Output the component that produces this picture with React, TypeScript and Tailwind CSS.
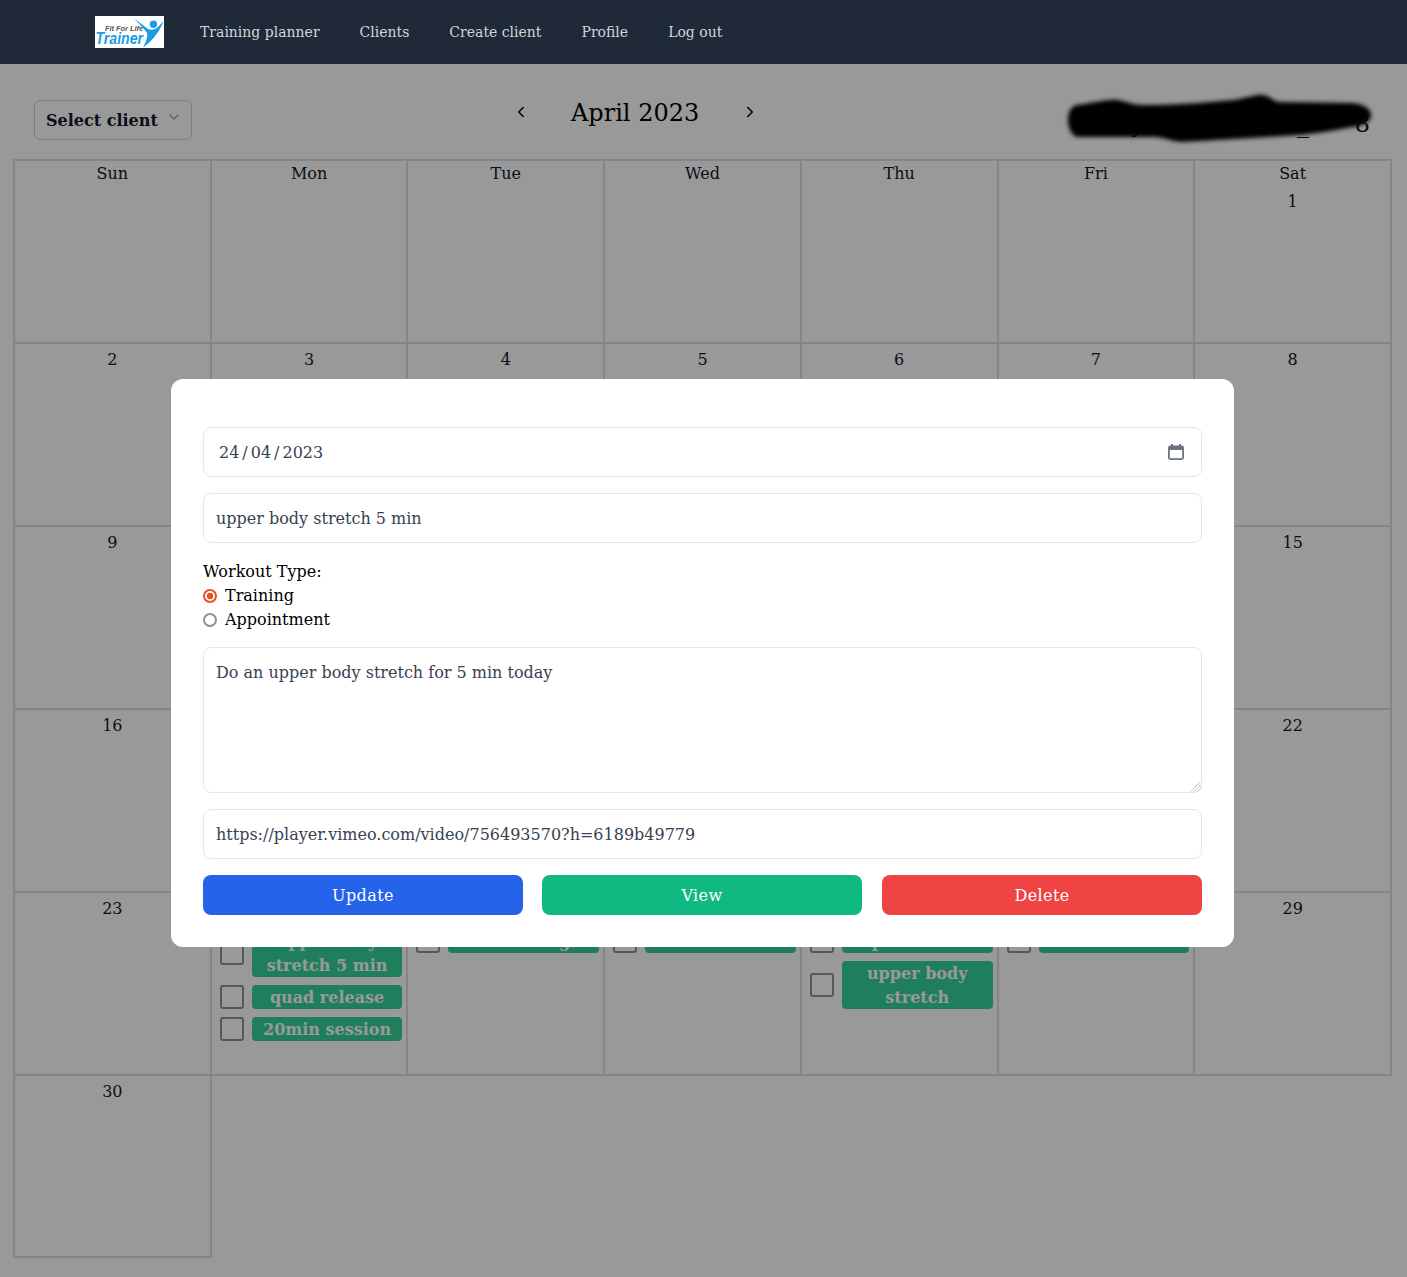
import { ChevronDown, ChevronLeft, ChevronRight } from "lucide-react";

type Ev = string;
const days: { label?: string; day?: number; events?: Ev[] }[] = [
  { label: "Sun" }, { label: "Mon" }, { label: "Tue" }, { label: "Wed" }, { label: "Thu" }, { label: "Fri" }, { label: "Sat", day: 1 },
  { day: 2 }, { day: 3 }, { day: 4 }, { day: 5 }, { day: 6 }, { day: 7 }, { day: 8 },
  { day: 9 }, { day: 10 }, { day: 11 }, { day: 12 }, { day: 13 }, { day: 14 }, { day: 15 },
  { day: 16 }, { day: 17 }, { day: 18 }, { day: 19 }, { day: 20 }, { day: 21 }, { day: 22 },
  { day: 23 },
  { day: 24, events: ["upper body stretch 5 min", "quad release", "20min session"] },
  { day: 25, events: ["stretching"] },
  { day: 26, events: ["20min session"] },
  { day: 27, events: ["spin session", "upper body stretch"] },
  { day: 28, events: ["20min session"] },
  { day: 29 },
  { day: 30 },
];

function Logo() {
  return (
    <svg width="69" height="32" viewBox="0 0 69 32" className="block bg-white">
      <text x="10" y="15" fontFamily="Liberation Sans" fontSize="8" fontStyle="italic" fontWeight="700" fill="#555" textLength="38" lengthAdjust="spacingAndGlyphs">Fit For Life</text>
      <text x="0.5" y="28.3" fontFamily="Liberation Sans" fontSize="17" fontStyle="italic" fontWeight="700" fill="#1d9be3" textLength="47.5" lengthAdjust="spacingAndGlyphs">Trainer</text>
      <circle cx="58.4" cy="8.3" r="3.7" fill="#1d9be3" />
      <path d="M39 2.5C44 6 49 10 53 13C57 15 61 13 64 10L68.5 5C65.5 13 60 23 48 31.5C51 26 53 20 52 17C48 11 43 7 39 2.5Z" fill="#1d9be3" />
    </svg>
  );
}

function Cell({ label, day, events, last }: { label?: string; day?: number; events?: Ev[]; last?: boolean }) {
  return (
    <div className={`${last ? "h-[184px]" : "h-[185px]"} -mr-[2px] -mb-[2px] border-2 border-[#dcdee2] text-center`}>
      {label && <div className="h-6 pt-px leading-6">{label}</div>}
      {day !== undefined && <div className={`${label ? "pt-[5px]" : "pt-1"} h-7 leading-6`}>{day}</div>}
      {events && (
        <div className="mt-[8px] pl-2 pr-1 flex flex-col gap-2">
          {events.map((e) => (
            <div key={e} className="flex items-center gap-2">
              <span className="w-6 h-6 shrink-0 rounded-[3px] border-2 border-[#8f8f9d]" />
              <span className="flex-1 rounded bg-[#34d399] text-white font-bold text-base leading-6">
                <span className="relative top-px">{e}</span>
              </span>
            </div>
          ))}
        </div>
      )}
    </div>
  );
}

function Field({ value }: { value: string }) {
  return (
    <input
      readOnly
      defaultValue={value}
      className="w-full h-[50px] rounded-lg border border-[#e5e7eb] px-3 text-[#374151] outline-none"
    />
  );
}

export default function App() {
  return (
    <div className="font-['DejaVu_Serif',serif] text-base text-[#111827] bg-white">
      <nav className="h-16 bg-[#1f2937] flex items-center pl-[95px] gap-9">
        <Logo />
        <div className="flex gap-10 text-sm text-[#d1d5db]">
          <a>Training planner</a>
          <a>Clients</a>
          <a>Create client</a>
          <a>Profile</a>
          <a>Log out</a>
        </div>
      </nav>

      <main className="relative h-[1213px] overflow-hidden">
        <div className="h-[95px] flex items-start pt-9 pl-[34px] pr-[37px]">
          <button className="w-[158px] h-10 rounded-md border border-[#d1d5db] pl-[11px] flex items-center gap-2 font-bold text-base">
            <span className="pt-px">Select client</span>
            <ChevronDown size={16} className="text-[#9ca3af] -mt-[6px]" />
          </button>
          <div className="ml-[320px] flex items-center -mt-2 h-10 text-black">
            <ChevronLeft size={18} strokeWidth={2} />
            <span className="ml-[41px] text-2xl pt-0.5">April 2023</span>
            <ChevronRight size={18} strokeWidth={2} className="ml-[42px]" />
          </div>
          <span className="ml-auto mt-2 text-2xl whitespace-pre">{"y                    _      8"}</span>
        </div>

        <svg className="absolute left-[1060px] top-[26px]" width="320" height="60" viewBox="1060 90 320 60">
          <defs>
            <filter id="soft"><feGaussianBlur stdDeviation="2" /></filter>
          </defs>
          <path
            filter="url(#soft)"
            fill="#000"
            d="M1077 105C1090 104 1105 99 1117 100C1125 101 1130 104 1140 105C1170 105 1205 103 1233 100C1245 99 1255 94 1263 95C1270 96 1272 101 1280 102L1350 103C1362 103 1370 108 1371 114C1372 120 1366 125 1353 127C1335 130 1315 135 1267 137L1183 142C1172 142 1168 138 1155 137L1077 137C1072 136 1068 128 1068 120C1068 112 1071 106 1077 105Z"
          />
        </svg>

        <div className="ml-[13px] mr-[17px] grid grid-cols-7 auto-rows-[183px]">
          {days.map((d, i) => (
            <Cell key={i} {...d} last={i === days.length - 1} />
          ))}
        </div>

        <div className="absolute inset-0 bg-black/40" />

        <div className="absolute left-[171px] top-[315px] w-[1063px] rounded-xl bg-white px-8 pt-12 pb-8 flex flex-col gap-4">
          <div className="h-[50px] rounded-lg border border-[#e5e7eb] pl-[15px] pr-4 flex items-center justify-between text-[#374151]">
            <span className="flex pt-[2px]">
              <span>24</span><span className="mx-[3px]">/</span><span>04</span><span className="mx-[3px]">/</span><span>2023</span>
            </span>
            <svg width="18" height="18" viewBox="0 0 18 18" fill="none">
              <path d="M5 1v3M13 1v3" stroke="#6b7280" strokeWidth="2" />
              <rect x="1.9" y="3.4" width="14.2" height="12.7" rx="1.5" stroke="#6b7280" strokeWidth="1.8" />
              <rect x="2" y="3.5" width="14" height="3.5" fill="#6b7280" />
            </svg>
          </div>
          <Field value="upper body stretch 5 min" />
          <div className="text-black mt-px -mb-px">
            <div className="h-6 leading-6">Workout Type:</div>
            <label className="h-6 flex items-center gap-2 leading-6">
              <input
                type="radio"
                name="type"
                defaultChecked
                className="w-3.5 h-3.5 m-0 appearance-none rounded-full border-2 border-[#ea5024] bg-[radial-gradient(circle,#ea5024_0,#ea5024_3px,#ffffff_3.6px)]"
              />
              Training
            </label>
            <label className="h-6 flex items-center gap-2 leading-6">
              <input type="radio" name="type" className="w-3.5 h-3.5 m-0 appearance-none rounded-full border-2 border-[#8f8f9d] bg-white" />
              Appointment
            </label>
          </div>
          <div className="relative">
            <textarea
              readOnly
              defaultValue="Do an upper body stretch for 5 min today"
              className="block w-full h-[146px] resize-none rounded-lg border border-[#e5e7eb] px-3 py-[13px] text-[#374151] outline-none"
            />
            <svg className="absolute right-[1px] bottom-[1px]" width="11" height="11" viewBox="0 0 11 11" fill="none">
              <path d="M0.5 10.5L10.5 0.5M4 10.5L10.5 4M7.5 10.5L10.5 7.5" stroke="#9a9aa4" strokeWidth="1" strokeDasharray="1 0.6" />
            </svg>
          </div>
          <Field value="https://player.vimeo.com/video/756493570?h=6189b49779" />
          <div className="flex tracking-wide">
            <button className="w-80 h-10 pt-[2px] rounded-lg bg-[#2563eb] text-white">Update</button>
            <button className="w-80 h-10 pt-[2px] ml-[19px] rounded-lg bg-[#10b981] text-white">View</button>
            <button className="w-80 h-10 pt-[2px] ml-5 rounded-lg bg-[#ef4444] text-white">Delete</button>
          </div>
        </div>
      </main>
    </div>
  );
}
